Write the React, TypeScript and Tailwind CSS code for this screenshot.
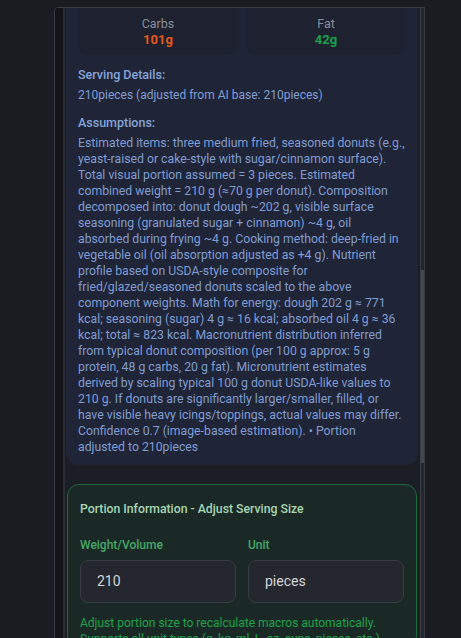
import React from "react";

const assumptionLines = [
  "Estimated items: three medium fried, seasoned donuts (e.g.,",
  "yeast-raised or cake-style with sugar/cinnamon surface).",
  "Total visual portion assumed = 3 pieces. Estimated",
  "combined weight = 210 g (≈70 g per donut). Composition",
  "decomposed into: donut dough ~202 g, visible surface",
  "seasoning (granulated sugar + cinnamon) ~4 g, oil",
  "absorbed during frying ~4 g. Cooking method: deep-fried in",
  "vegetable oil (oil absorption adjusted as +4 g). Nutrient",
  "profile based on USDA-style composite for",
  "fried/glazed/seasoned donuts scaled to the above",
  "component weights. Math for energy: dough 202 g ≈ 771",
  "kcal; seasoning (sugar) 4 g ≈ 16 kcal; absorbed oil 4 g ≈ 36",
  "kcal; total ≈ 823 kcal. Macronutrient distribution inferred",
  "from typical donut composition (per 100 g approx: 5 g",
  "protein, 48 g carbs, 20 g fat). Micronutrient estimates",
  "derived by scaling typical 100 g donut USDA-like values to",
  "210 g. If donuts are significantly larger/smaller, filled, or",
  "have visible heavy icings/toppings, actual values may differ.",
  "Confidence 0.7 (image-based estimation). • Portion",
  "adjusted to 210pieces",
];

function MacroBox({ label, value, color }: { label: string; value: string; color: string }) {
  return (
    <div className="rounded-b-xl bg-[#1d2130] pt-[20px] pb-[7px] text-center">
      <div className="text-[12.5px] leading-4 text-[#8a8e98]">{label}</div>
      <div className={`text-[13px] leading-4 font-bold ${color}`}>{value}</div>
    </div>
  );
}

export default function App() {
  return (
    <div
      className="h-[638px] w-[461px] overflow-hidden bg-[#1b1b22] pt-[7px]"
      style={{ fontFamily: "Roboto, 'Noto Sans', sans-serif" }}
    >
      <div className="ml-[54px] flex h-[640px] w-[371px] overflow-hidden rounded-tl-[4px] border border-[#3a3c44]">
        {/* left strip */}
        <div className="w-[8px] bg-[#141418]" />
        <div className="w-[2px] bg-[#2a2c34]" />

        {/* scroll content */}
        <div className="flex w-[355px] flex-col bg-[#1c1e26] pl-[1px] pr-[2px]">
          <div className="-mt-[12px] rounded-xl bg-[#1f2437] px-3 pb-[10px]">
            <div className="grid grid-cols-2 gap-2">
              <MacroBox label="Carbs" value="101g" color="text-[#e5571d]" />
              <MacroBox label="Fat" value="42g" color="text-[#17a24a]" />
            </div>

            <div className="mt-[10px] text-[12.5px] leading-5 font-medium text-[#86a5da]">Serving Details:</div>
            <div className="text-[12px] leading-5 text-[#809fd5]">210pieces (adjusted from AI base: 210pieces)</div>

            <div className="mt-[8px] text-[12.5px] leading-5 font-medium text-[#86a5da]">Assumptions:</div>
            <p className="mt-[2px] whitespace-nowrap text-[12.25px] leading-4 text-[#7f9dd3]">
              {assumptionLines.map((line, i) => (
                <React.Fragment key={i}>
                  {line}
                  {i < assumptionLines.length - 1 && <br />}
                </React.Fragment>
              ))}
            </p>
          </div>

          <div className="mt-[19px] ml-[1px] mr-[1px] rounded-xl border border-[#1d6a3a] bg-[#1b2926] px-3 pt-4">
            <div className="text-[12.25px] leading-4 font-medium text-[#a6d6b3]">
              Portion Information - Adjust Serving Size
            </div>
            <div className="mt-5 grid grid-cols-2 gap-3">
              <div>
                <div className="mb-[7px] text-[12px] leading-4 font-medium text-[#45a867]">Weight/Volume</div>
                <div className="flex h-[43px] items-center rounded-lg border border-[#383b44] bg-[#25272f] px-4 text-[14px] text-[#d4d4d8]">
                  210
                </div>
              </div>
              <div>
                <div className="mb-[7px] text-[12px] leading-4 font-medium text-[#45a867]">Unit</div>
                <div className="flex h-[43px] items-center rounded-lg border border-[#383b44] bg-[#25272f] px-4 text-[14px] text-[#d4d4d8]">
                  pieces
                </div>
              </div>
            </div>
            <p className="mt-3 text-[12px] leading-4 text-[#1fa34c]">
              Adjust portion size to recalculate macros automatically.
              <br />
              Supports all unit types (g, kg, ml, L, oz, cups, pieces, etc.)
            </p>
          </div>
        </div>

        {/* scrollbar */}
        <div className="flex w-[4px] flex-col border-l border-[#3c3e46] bg-[#24262d]">
          <div className="h-[262px]" />
          <div className="h-[193px] bg-[#45474f]" />
        </div>
      </div>
    </div>
  );
}
